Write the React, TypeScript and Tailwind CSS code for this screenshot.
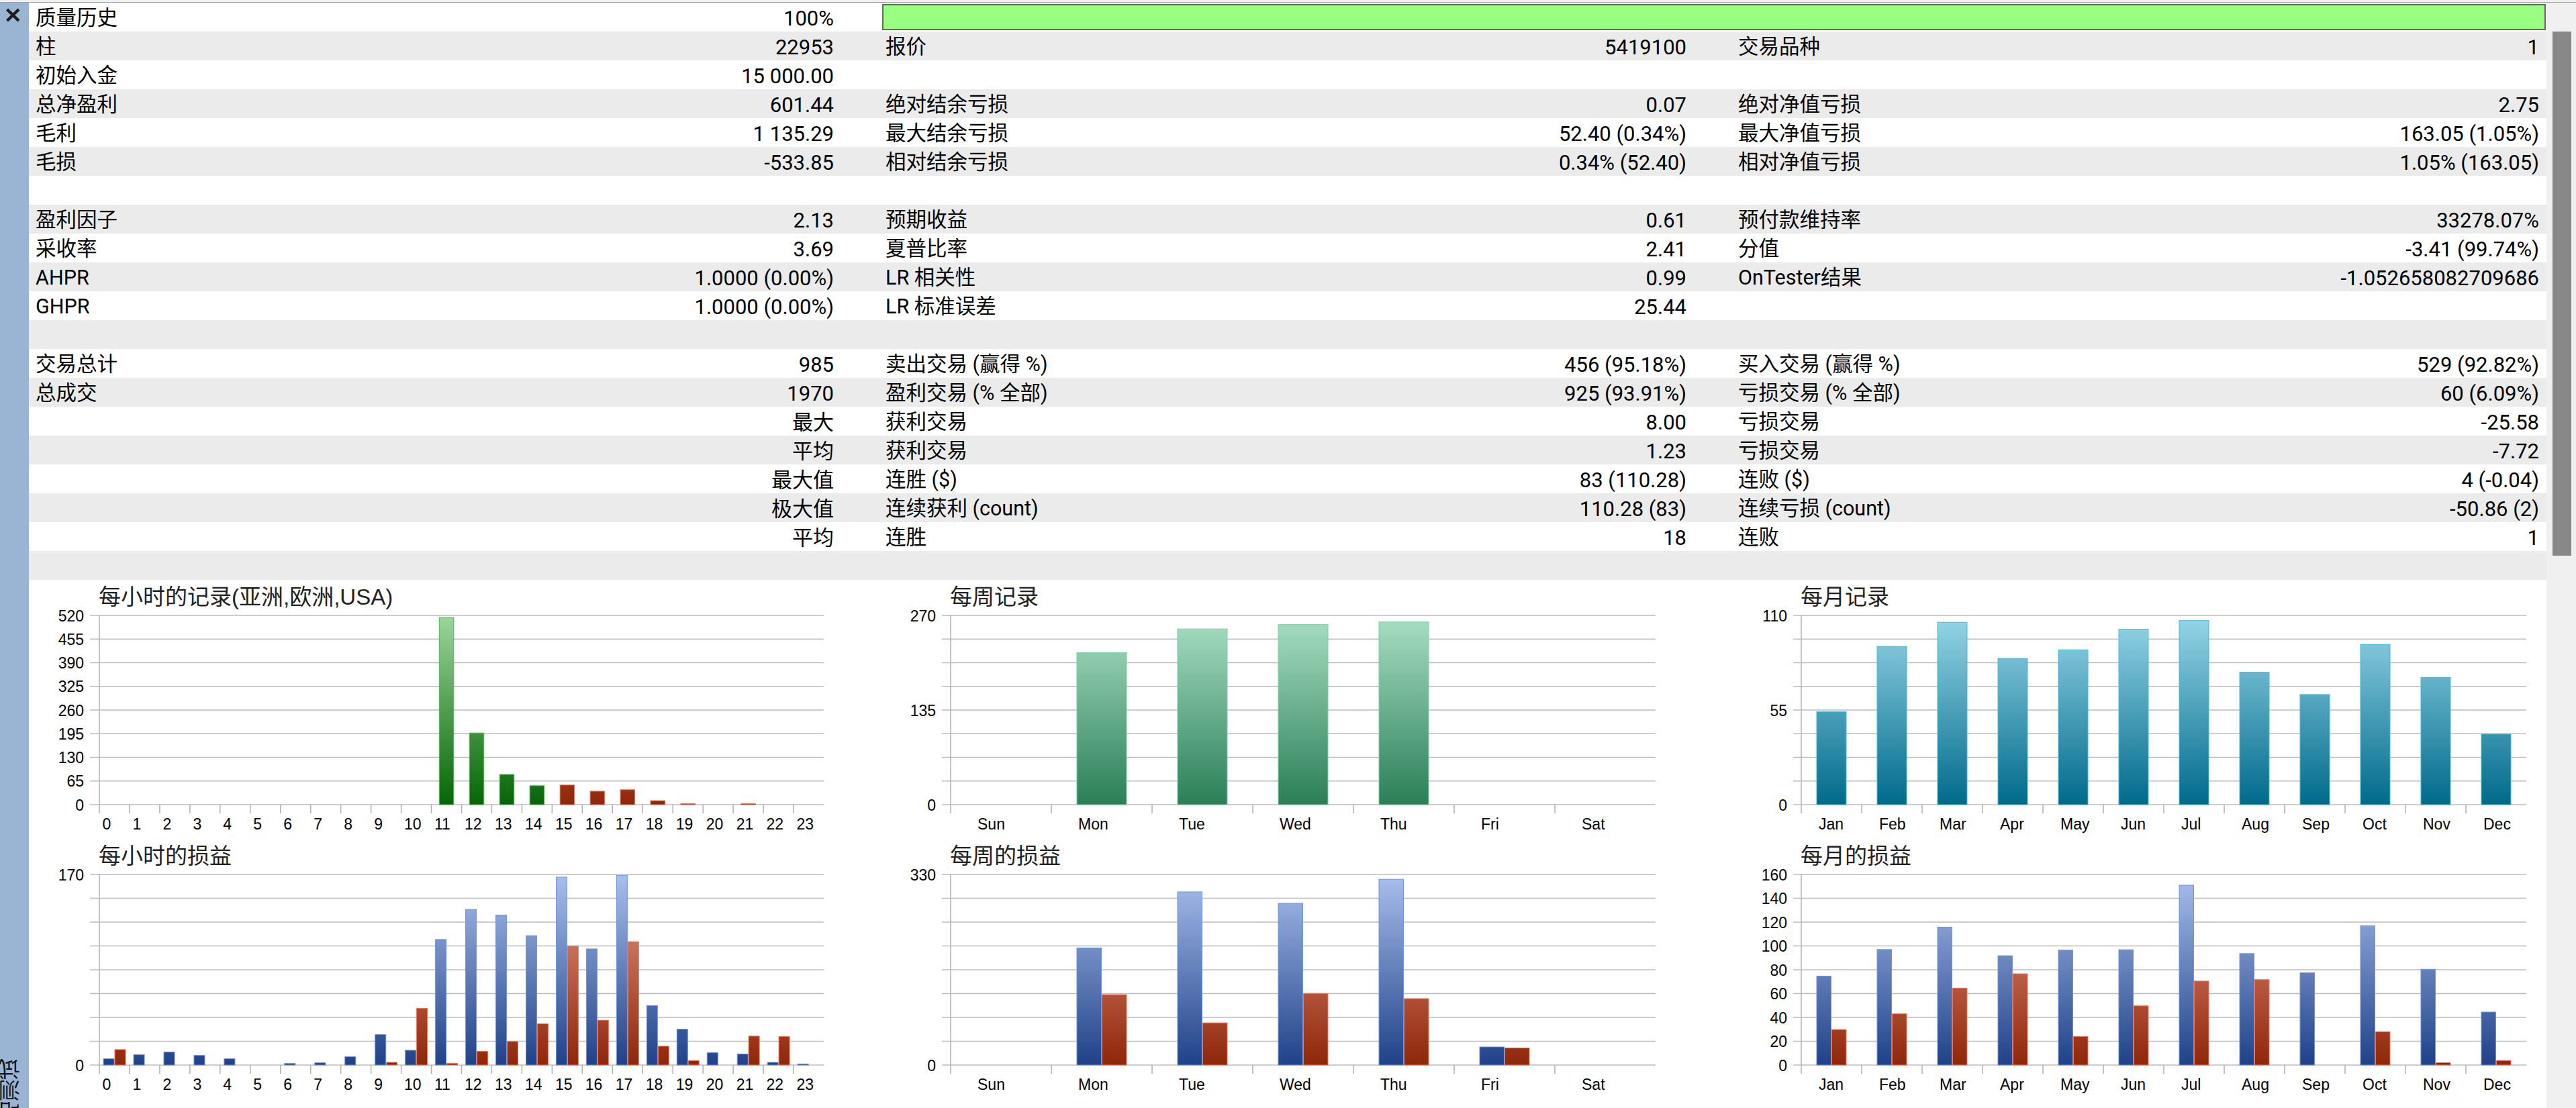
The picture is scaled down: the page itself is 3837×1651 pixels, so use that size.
const sans = "font-['Roboto','Noto_Sans_CJK_SC',sans-serif]";

const rows: string[][] = [
  ["柱", "22953", "报价", "5419100", "交易品种", "1"],
  ["初始入金", "15 000.00", "", "", "", ""],
  ["总净盈利", "601.44", "绝对结余亏损", "0.07", "绝对净值亏损", "2.75"],
  ["毛利", "1 135.29", "最大结余亏损", "52.40 (0.34%)", "最大净值亏损", "163.05 (1.05%)"],
  ["毛损", "-533.85", "相对结余亏损", "0.34% (52.40)", "相对净值亏损", "1.05% (163.05)"],
  ["", "", "", "", "", ""],
  ["盈利因子", "2.13", "预期收益", "0.61", "预付款维持率", "33278.07%"],
  ["采收率", "3.69", "夏普比率", "2.41", "分值", "-3.41 (99.74%)"],
  ["AHPR", "1.0000 (0.00%)", "LR 相关性", "0.99", "OnTester结果", "-1.052658082709686"],
  ["GHPR", "1.0000 (0.00%)", "LR 标准误差", "25.44", "", ""],
  ["", "", "", "", "", ""],
  ["交易总计", "985", "卖出交易 (赢得 %)", "456 (95.18%)", "买入交易 (赢得 %)", "529 (92.82%)"],
  ["总成交", "1970", "盈利交易 (% 全部)", "925 (93.91%)", "亏损交易 (% 全部)", "60 (6.09%)"],
  ["", "最大", "获利交易", "8.00", "亏损交易", "-25.58"],
  ["", "平均", "获利交易", "1.23", "亏损交易", "-7.72"],
  ["", "最大值", "连胜 ($)", "83 (110.28)", "连败 ($)", "4 (-0.04)"],
  ["", "极大值", "连续获利 (count)", "110.28 (83)", "连续亏损 (count)", "-50.86 (2)"],
  ["", "平均", "连胜", "18", "连败", "1"],
  ["", "", "", "", "", ""],
];

const Cell = ({ label, value, pad }: { label: string; value: string; pad: string }) => (
  <div className={`flex items-center justify-between pt-[3px] ${pad}`}>
    <span className="text-[30.5px]">{label}</span>
    <span>{value}</span>
  </div>
);

const Row = ({ row, gray }: { row: string[]; gray: boolean }) => (
  <div className={`grid h-[43px] grid-cols-[1199px_1270px_1270px] pr-[11px] ${gray ? "bg-[#ebebeb]" : "bg-white"}`}>
    <Cell label={row[0]} value={row[1]} pad="pl-[10px]" />
    <Cell label={row[2]} value={row[3]} pad="pl-[77px]" />
    <Cell label={row[4]} value={row[5]} pad="pl-[77px]" />
  </div>
);

type Pal = { top: string; bottom: string; edge: string };
const green: Pal = { top: "#9cd59c", bottom: "#066506", edge: "#58b458" };
const mint: Pal = { top: "#a9dfc3", bottom: "#2a7f57", edge: "#7fd0a8" };
const teal: Pal = { top: "#97d6e8", bottom: "#006a8a", edge: "#42bcdc" };
const blue: Pal = { top: "#a9bfec", bottom: "#1f4188", edge: "#7093dd" };
const red: Pal = { top: "#ea9c8a", bottom: "#8f2608", edge: "#ef7458" };

type Bar = { value: number; pal: Pal; offset: number; width: number };

type ChartProps = {
  id: string;
  title: string;
  left: number; // plot left in svg coords
  gridLeft: number;
  right: number;
  cats: string[];
  labelOffset: number;
  max: number;
  yLabels: (number | null)[];
  height: number;
  top: number;
  bottom: number;
  titleY: number;
  width: number;
  bars: (catIdx: number) => Bar[];
};

const Chart = (p: ChartProps) => {
  const catW = (p.right - p.left) / p.cats.length;
  const h = p.bottom - p.top;
  const pals = [green, mint, teal, blue, red];
  return (
    <svg width={p.width} height={p.height} className="block">
      <defs>
        {pals.map((c, i) => (
          <linearGradient key={i} id={`${p.id}-${i}`} gradientUnits="userSpaceOnUse" x1="0" x2="0" y1={p.top} y2={p.bottom}>
            <stop offset="0" stopColor={c.top} />
            <stop offset="1" stopColor={c.bottom} />
          </linearGradient>
        ))}
      </defs>
      <text x={p.left - 1} y={p.titleY} fontSize="33" fill="#222" fontFamily="'Liberation Sans','Noto Sans CJK SC',sans-serif">
        {p.title}
      </text>
      {p.yLabels.map((v, i) => {
        const y = p.top + (h * i) / 8;
        return (
          <g key={i}>
            <line x1={p.gridLeft} x2={p.right} y1={y} y2={y} stroke="#bdbdbd" strokeWidth="1.5" />
            {v !== null && (
              <text x={p.gridLeft - 9} y={y + 8.5} textAnchor="end" fontSize="23" fill="#000" fontFamily="'Liberation Sans',sans-serif">
                {v}
              </text>
            )}
          </g>
        );
      })}
      <line x1={p.left} x2={p.left} y1={p.top} y2={p.bottom + 13} stroke="#b0b0b0" strokeWidth="1.5" />
      {p.cats.map((c, i) => {
        const x = p.left + catW * i;
        return (
          <g key={c}>
            {i > 0 && <line x1={x} x2={x} y1={p.bottom} y2={p.bottom + 13} stroke="#b0b0b0" strokeWidth="1.5" />}
            <text x={x + p.labelOffset} y={p.bottom + 37} fontSize="23" fill="#000" fontFamily="'Liberation Sans',sans-serif">
              {c}
            </text>
            {p.bars(i).map((b, j) => {
              const bh = (b.value / p.max) * h;
              if (bh <= 0) return null;
              const idx = pals.indexOf(b.pal);
              return (
                <rect
                  key={j}
                  x={x + b.offset + 0.5}
                  y={p.bottom - bh}
                  width={b.width - 1}
                  height={bh}
                  fill={`url(#${p.id}-${idx})`}
                  stroke={b.pal.edge}
                  strokeWidth="1"
                />
              );
            })}
          </g>
        );
      })}
    </svg>
  );
};

const hours = Array.from({ length: 24 }, (_, i) => String(i));
const days = ["Sun", "Mon", "Tue", "Wed", "Thu", "Fri", "Sat"];
const months = ["Jan", "Feb", "Mar", "Apr", "May", "Jun", "Jul", "Aug", "Sep", "Oct", "Nov", "Dec"];

const hourRec = [0, 0, 0, 0, 0, 0, 0, 0, 0, 0, 0, 514, 197, 83, 52, 54, 37, 41, 11, 3, 0, 3, 0, 0];
const hourBlue = [5.6, 9.2, 11.6, 8.6, 5.6, 0, 1.4, 2, 7.4, 27.2, 13.2, 112, 138.8, 133.8, 115.4, 167.6, 103.6, 169, 53, 32, 11, 9.8, 2.4, 1];
const hourRed = [13.8, 0, 0, 0, 0, 0, 0, 0, 0, 2.4, 50.6, 1.4, 12.2, 21, 36.8, 106.2, 40, 110, 16.8, 4, 0, 25.8, 25.4, 0];
const dayRec = [0, 217, 250.7, 257, 260.6, 0, 0];
const dayBlue = [0, 202.7, 299.8, 280, 321.6, 31.4, 0];
const dayRed = [0, 121.9, 73, 123.7, 115, 29.6, 0];
const monRec = [54, 92, 106, 85, 90, 102, 107, 77, 64, 93, 74, 41];
const monBlue = [74.6, 97, 115.8, 91.8, 96.5, 96.8, 151, 93.6, 77.5, 117, 80.4, 44.5];
const monRed = [29.8, 43, 64.6, 76.6, 24, 49.7, 70.5, 71.7, 0, 28, 2, 3.8];

const top1 = { height: 386, top: 53, bottom: 335, titleY: 37 };
const top2 = { height: 401, top: 53, bottom: 337, titleY: 37 };

const col1 = { width: 1257, left: 105, gridLeft: 91, right: 1184, cats: hours, labelOffset: 4.5 };
const col2 = { width: 1250, left: 116, gridLeft: 103, right: 1166, cats: days, labelOffset: 40 };
const col3 = { width: 1243, left: 133, gridLeft: 121, right: 1213, cats: months, labelOffset: 26 };

const App = () => {
  return (
    <div className={`flex h-[1651px] w-[3837px] flex-col overflow-hidden bg-white text-[31px] leading-none text-black ${sans}`}>
      <div className="h-[4px] border-b border-[#a0a0a0] bg-[#f0f0f0]" />
      <div className="flex min-h-0 flex-1">
        <div className="flex w-[43px] flex-col justify-between overflow-hidden bg-[#9ab5d3]">
          <svg width="43" height="36" viewBox="0 0 43 36" className="block">
            <path d="M10.5 10 L28 27 M28 10 L10.5 27" stroke="#1c1c1c" strokeWidth="4.5" fill="none" />
          </svg>
          <div className="-mb-[54px] ml-[1px] rotate-180 text-[32px] leading-[32px] text-[#111] [writing-mode:vertical-rl]">策略测试</div>
        </div>

        <div className="w-[3750px]">
          <div className="flex h-[43px] items-center bg-white">
            <div className="w-[1199px]">
              <Cell label="质量历史" value="100%" pad="pl-[10px]" />
            </div>
            <div className="ml-[72px] h-[39px] w-[2478px] border-2 border-[#666] bg-[#99ff80]" />
          </div>
          {rows.map((row, i) => (
            <Row key={i} row={row} gray={i % 2 === 0} />
          ))}

          <div className="grid grid-cols-[1257px_1250px_1243px]">
            <Chart id="hrec" title="每小时的记录(亚洲,欧洲,USA)" {...col1} {...top1} max={520}
              yLabels={[520, 455, 390, 325, 260, 195, 130, 65, 0]}
              bars={(i) => [{ value: hourRec[i], pal: i < 15 ? green : red, offset: 11.25, width: 22.5 }]} />
            <Chart id="drec" title="每周记录" {...col2} {...top1} max={270}
              yLabels={[270, null, null, null, 135, null, null, null, 0]}
              bars={(i) => [{ value: dayRec[i], pal: mint, offset: 37.5, width: 75 }]} />
            <Chart id="mrec" title="每月记录" {...col3} {...top1} max={110}
              yLabels={[110, null, null, null, 55, null, null, null, 0]}
              bars={(i) => [{ value: monRec[i], pal: teal, offset: 22.5, width: 45 }]} />
            <Chart id="hpl" title="每小时的损益" {...col1} {...top2} max={170}
              yLabels={[170, null, null, null, null, null, null, null, 0]}
              bars={(i) => [
                { value: hourBlue[i], pal: blue, offset: 5.6, width: 17 },
                { value: hourRed[i], pal: red, offset: 22.5, width: 17 },
              ]} />
            <Chart id="dpl" title="每周的损益" {...col2} {...top2} max={330}
              yLabels={[330, null, null, null, null, null, null, null, 0]}
              bars={(i) => [
                { value: dayBlue[i], pal: blue, offset: 37.5, width: 37.5 },
                { value: dayRed[i], pal: red, offset: 75, width: 37.5 },
              ]} />
            <Chart id="mpl" title="每月的损益" {...col3} {...top2} max={160}
              yLabels={[160, 140, 120, 100, 80, 60, 40, 20, 0]}
              bars={(i) => [
                { value: monBlue[i], pal: blue, offset: 22.5, width: 22.5 },
                { value: monRed[i], pal: red, offset: 45, width: 22.5 },
              ]} />
          </div>
        </div>

        <div className="flex-1 bg-[#f0f0f0] pl-[9px] pt-[43px]">
          <div className="h-[781px] w-[28px] bg-[#888888]" />
        </div>
      </div>
    </div>
  );
};

export default App;
